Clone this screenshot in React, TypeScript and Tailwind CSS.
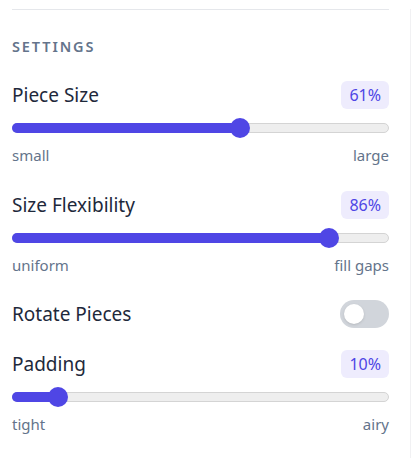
import { useState } from "react";

function Slider({ value, onChange }: { value: number; onChange: (v: number) => void }) {
  // thumb center travels from 10px to (width - 10px), like a native range input
  const pos = `calc(10px + (100% - 20px) * ${value / 100})`;
  return (
    <div className="relative h-5 flex items-center">
      <div className="w-full h-[10px] rounded-full bg-[#eeeeee] border border-[#d4d4d4]" />
      <div
        className="absolute left-0 top-[5px] h-[10px] rounded-full bg-[#4f46e5]"
        style={{ width: pos }}
      />
      <div
        className="absolute top-0 w-5 h-5 -ml-[10px] rounded-full bg-[#4f46e5]"
        style={{ left: pos }}
      />
      <input
        type="range"
        min={0}
        max={100}
        value={value}
        onChange={(e) => onChange(Number(e.target.value))}
        className="absolute inset-0 w-full opacity-0 cursor-pointer"
      />
    </div>
  );
}

function SliderRow({
  label,
  value,
  onChange,
  min,
  max,
}: {
  label: string;
  value: number;
  onChange: (v: number) => void;
  min: string;
  max: string;
}) {
  return (
    <div>
      <div className="flex items-center justify-between h-7">
        <span className="text-[19px] leading-7 text-[#1e293b]">{label}</span>
        <span className="h-7 px-[8px] rounded-md bg-[#eeecfd] text-[#4f46e5] text-[16px] leading-7">
          {value}%
        </span>
      </div>
      <div className="mt-[9px]">
        <Slider value={value} onChange={onChange} />
      </div>
      <div className="mt-[7px] flex justify-between text-[15px] leading-5 text-[#64748b]">
        <span>{min}</span>
        <span>{max}</span>
      </div>
    </div>
  );
}

export default function App() {
  const [size, setSize] = useState(61);
  const [flex, setFlex] = useState(86);
  const [rotate, setRotate] = useState(false);
  const [padding, setPadding] = useState(10);

  return (
    <div
      className="w-[411px] h-[458px] bg-white border-r border-[#f1f1f3] pl-3 pr-[21px]"
      style={{ fontFamily: '"Noto Sans", "Open Sans", sans-serif' }}
    >
      <div className="mt-[9px] border-t border-gray-200 pt-[26px]">
        <h2 className="text-[14.5px] leading-5 font-semibold uppercase tracking-[0.13em] text-[#64748b]">
          Settings
        </h2>

        <div className="mt-[25px]">
          <SliderRow label="Piece Size" value={size} onChange={setSize} min="small" max="large" />
        </div>
        <div className="mt-[26px]">
          <SliderRow label="Size Flexibility" value={flex} onChange={setFlex} min="uniform" max="fill gaps" />
        </div>

        <div className="mt-[25px] flex items-center justify-between h-7">
          <span className="text-[19px] leading-7 text-[#1e293b]">Rotate Pieces</span>
          <button
            onClick={() => setRotate(!rotate)}
            className={`relative w-[49px] h-7 rounded-full ${rotate ? "bg-[#4f46e5]" : "bg-[#d1d5db]"}`}
          >
            <span
              className={`absolute top-1 w-5 h-5 rounded-full bg-white shadow-sm ${rotate ? "left-[25px]" : "left-1"}`}
            />
          </button>
        </div>

        <div className="mt-[22px]">
          <SliderRow label="Padding" value={padding} onChange={setPadding} min="tight" max="airy" />
        </div>
      </div>
    </div>
  );
}
